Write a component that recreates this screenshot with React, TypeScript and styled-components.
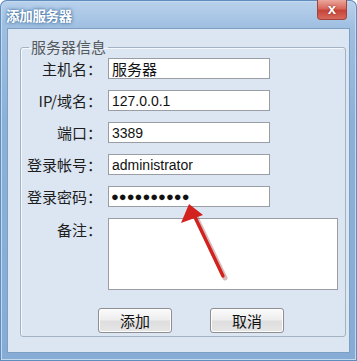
import styled, { createGlobalStyle } from 'styled-components';

const GlobalStyle = createGlobalStyle`
  html, body {
    margin: 0;
    padding: 0;
    background: #ffffff;
  }
  * {
    box-sizing: border-box;
  }
`;

const CJK = `"Noto Sans CJK SC", "Noto Sans", sans-serif`;
const LATIN = `"Liberation Sans", "Noto Sans CJK SC", sans-serif`;

const fields = [
    { label: '主机名：', value: '服务器', cjk: true },
    { label: 'IP/域名：', value: '127.0.0.1' },
    { label: '端口：', value: '3389' },
    { label: '登录帐号：', value: 'administrator' },
];

function App() {
    return (
        <>
            <GlobalStyle />
            <StWindow>
                <StTitleBar>
                    <StTitle>添加服务器</StTitle>
                    <StClose>x</StClose>
                </StTitleBar>
                <StClient>
                    <StGroup>
                        <StLegend>服务器信息</StLegend>
                        <StForm>
                            {fields.map((f) => (
                                <StRow key={f.label}>
                                    <StLabel>{f.label}</StLabel>
                                    <StField $cjk={f.cjk}>{f.value}</StField>
                                </StRow>
                            ))}
                            <StRow>
                                <StLabel>登录密码：</StLabel>
                                <StField $dots>●●●●●●●●●●</StField>
                            </StRow>
                            <StRow $top>
                                <StLabel $top>备注：</StLabel>
                                <StMemo />
                            </StRow>
                        </StForm>
                        <StButtons>
                            <StButton>添加</StButton>
                            <StButton>取消</StButton>
                        </StButtons>
                    </StGroup>
                    <StArrow width="357" height="361" viewBox="0 0 357 361">
                        <line x1="225" y1="278" x2="195" y2="215" stroke="#7a2220" strokeOpacity="0.3" strokeWidth="5" strokeLinecap="round" />
                        <line x1="223" y1="276" x2="193" y2="213" stroke="#d3211d" strokeWidth="3.4" strokeLinecap="round" />
                        <polygon points="189,204 181,223 203,215" fill="#d3211d" />
                    </StArrow>
                </StClient>
            </StWindow>
        </>
    );
}

export default App;

const StWindow = styled.div`
    position: relative;
    width: 357px;
    height: 361px;
    display: flex;
    flex-direction: column;
    padding: 0 7px 8px 7px;
    border-radius: 7px 7px 0 0;
    background: linear-gradient(to bottom, #b9d2ec 0px, #9fbfe1 28px, #8cb1d8 120px, #86acd6 100%);
    box-shadow: inset 0 0 0 1px #5f8dbf, inset 0 0 0 2px #c4d8ee;
    overflow: hidden;
`;

const StTitleBar = styled.div`
    height: 28px;
    display: flex;
    align-items: flex-start;
`;

const StTitle = styled.div`
    margin-top: 6px;
    margin-left: -1px;
    font-family: ${CJK};
    font-size: 13.5px;
    font-weight: 700;
    line-height: 18px;
    color: #ffffff;
    letter-spacing: -0.3px;
    text-shadow: 0 0 4px #3f6e9e, 0 0 2px #4a78a8;
`;

const StClose = styled.div`
    margin-left: auto;
    margin-right: 3px;
    width: 30px;
    height: 20px;
    display: flex;
    align-items: center;
    justify-content: center;
    border: 1px solid #a4433b;
    border-top: none;
    border-radius: 0 0 4px 4px;
    background: linear-gradient(to bottom, #eba79c 0%, #d9685c 45%, #c7443a 55%, #d66a5b 100%);
    color: #ffffff;
    font-family: ${LATIN};
    font-size: 15px;
    font-weight: 700;
    line-height: 1;
    padding-bottom: 3px;
    text-shadow: 0 0 2px #7a1f18;
`;

const StClient = styled.div`
    flex: 1;
    display: flex;
    flex-direction: column;
    padding: 9px 3px 15px 12px;
    background: #dbe6f2;
    border: 1px solid #7f9fc2;
`;

const StGroup = styled.fieldset`
    flex: 1;
    margin: 0;
    padding: 0;
    min-width: 0;
    border: 1px solid #a3b3c4;
    border-radius: 3px;
    box-shadow: 1px 1px 0 #f4f8fc inset;
    display: flex;
    flex-direction: column;
`;

const StLegend = styled.legend`
    margin-left: 8px;
    padding: 0 2px;
    font-family: ${CJK};
    font-size: 15px;
    line-height: 18px;
    color: #555a60;
`;

const StForm = styled.div`
    display: flex;
    flex-direction: column;
    gap: 11px;
    padding-top: 2px;
`;

const StRow = styled.div<{ $top?: boolean }>`
    display: grid;
    grid-template-columns: 81px auto;
    column-gap: 6px;
    align-items: ${(p) => (p.$top ? 'start' : 'center')};
`;

const StLabel = styled.div<{ $top?: boolean }>`
    text-align: right;
    font-family: ${CJK};
    font-size: 15px;
    line-height: 18px;
    color: #1e1e1e;
    white-space: nowrap;
    margin-top: ${(p) => (p.$top ? '3px' : '0')};
`;

const StField = styled.div<{ $cjk?: boolean; $dots?: boolean }>`
    width: 162px;
    height: 21px;
    background: #ffffff;
    border: 1px solid #9a9ea3;
    padding: 0 ${(p) => (p.$dots ? '2px' : '3px')};
    display: flex;
    align-items: center;
    font-family: ${(p) => (p.$cjk ? CJK : LATIN)};
    font-size: ${(p) => (p.$cjk ? '15px' : p.$dots ? '13px' : '14px')};
    color: #111111;
    white-space: nowrap;
    overflow: hidden;
`;

const StMemo = styled.div`
    width: 230px;
    height: 72px;
    background: #ffffff;
    border: 1px solid #9a9ea3;
`;

const StButtons = styled.div`
    display: flex;
    gap: 38px;
    padding-left: 77px;
    margin-top: 18px;
`;

const StButton = styled.button`
    width: 74px;
    height: 25px;
    padding: 0;
    border: 1px solid #8d8f92;
    border-radius: 3px;
    background: linear-gradient(to bottom, #fbfbfb 0%, #ededed 48%, #dedede 52%, #e6e6e6 100%);
    box-shadow: inset 0 0 0 1px #fcfcfc;
    font-family: ${CJK};
    font-size: 15px;
    line-height: 1;
    color: #111111;
`;

const StArrow = styled.svg`
    position: absolute;
    left: 0;
    top: 0;
    pointer-events: none;
`;
